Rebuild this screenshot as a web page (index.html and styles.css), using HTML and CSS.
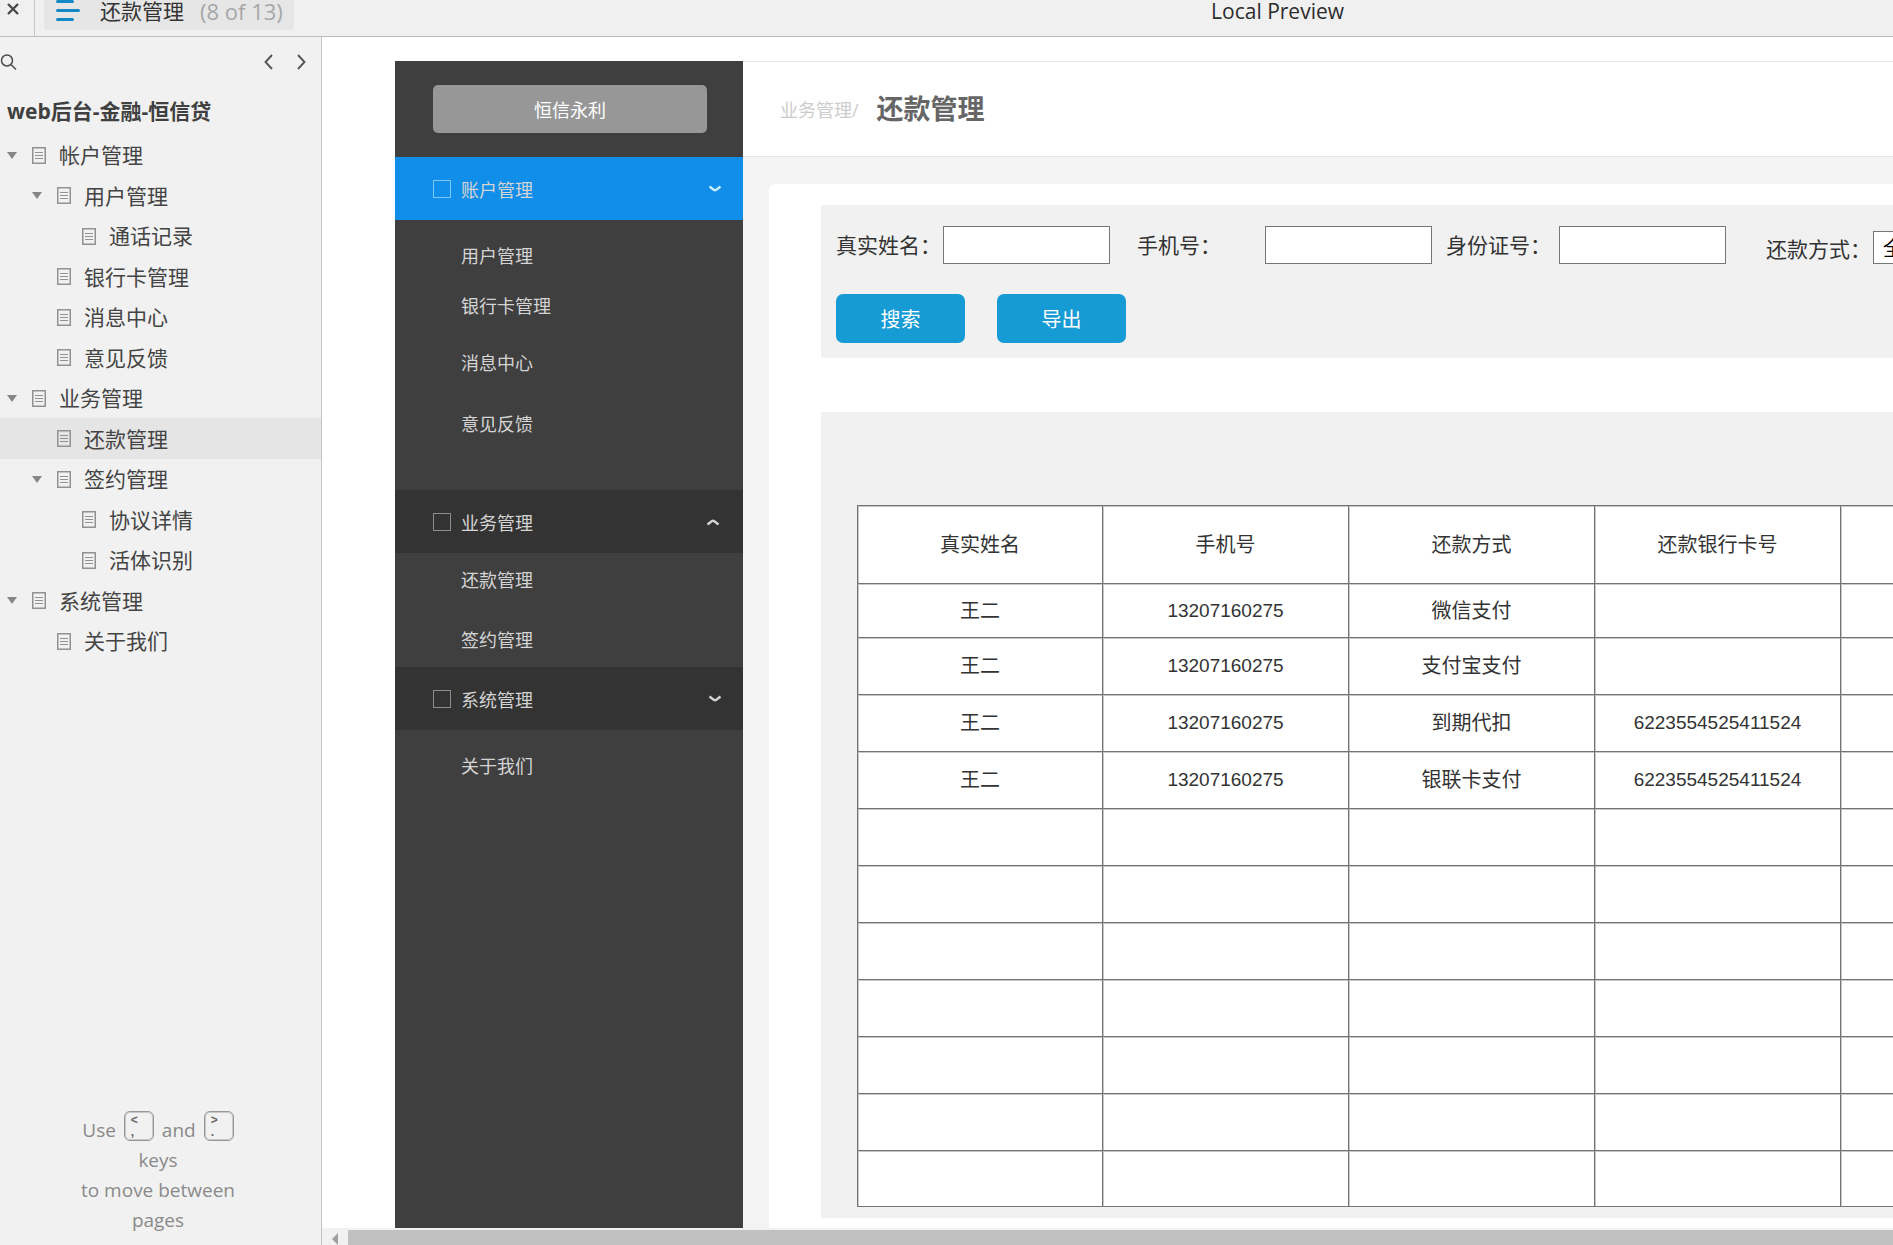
FILE: index.html
```html
<!DOCTYPE html>
<html lang="zh-CN">
<head>
<meta charset="utf-8">
<meta name="viewport" content="width=device-width, initial-scale=1">
<title>还款管理</title>
<link rel="stylesheet" href="styles.css">
</head>
<body>
<svg class="sprite" aria-hidden="true">
  <symbol id="page" viewBox="0 0 14 17">
    <path d="M.75.75h12.5v15.5H.75z" fill="none" stroke="#929292" stroke-width="1.5"/>
    <path d="M3 5.5h8M3 8.5h8M3 11.5h8" stroke="#929292" stroke-width="1.2"/>
  </symbol>
  <symbol id="caret" viewBox="0 0 10 7"><path d="M0 0h10L5 7z" fill="#868686"/></symbol>
  <symbol id="chevron" viewBox="0 0 14 8"><path d="M1.500 1.500L6 5Q7 5.600 8 5L12.500 1.500" fill="none" stroke="currentColor" stroke-width="2.400"/></symbol>
</svg>

<header class="topbar">
  <button class="close" type="button" aria-label="Close">
    <svg width="12" height="12" viewBox="0 0 12 12"><path d="M1 1l10 10M11 1L1 11" stroke="#4a4a4a" stroke-width="2.400"/></svg>
  </button>
  <button class="tab" type="button">
    <svg width="24" height="22" viewBox="0 0 24 22"><path d="M1.500 1.500h15M1.500 10.500h21M1.500 19.500h15" stroke="#138ac6" stroke-width="3" stroke-linecap="round"/></svg>
    <span class="tab-name">还款管理</span>
    <span class="tab-count">(8 of 13)</span>
  </button>
  <span class="preview">Local Preview</span>
</header>

<div class="workspace">
  <aside class="sitemap">
    <div class="tools">
      <button class="tool" type="button" aria-label="Search">
        <svg width="17" height="17" viewBox="0 0 17 17" fill="none" stroke="#4c4c4c" stroke-width="1.500"><circle cx="7" cy="6.500" r="5.500"/><path d="M11 10.500l5 5"/></svg>
      </button>
      <button class="tool prev" type="button" aria-label="Previous page">
        <svg width="9" height="16" viewBox="0 0 9 16" fill="none" stroke="#555" stroke-width="1.900"><path d="M8 1L1.500 8L8 15"/></svg>
      </button>
      <button class="tool" type="button" aria-label="Next page">
        <svg width="9" height="16" viewBox="0 0 9 16" fill="none" stroke="#555" stroke-width="1.900"><path d="M1 1l6.500 7L1 15"/></svg>
      </button>
    </div>
    <h1 class="project">web后台-金融-恒信贷</h1>
    <ul class="tree">
      <li class="node level-1"><svg class="caret"><use href="#caret"/></svg><svg class="page"><use href="#page"/></svg><a href="#">帐户管理</a></li>
      <li class="node level-2"><svg class="caret"><use href="#caret"/></svg><svg class="page"><use href="#page"/></svg><a href="#">用户管理</a></li>
      <li class="node level-3"><svg class="page"><use href="#page"/></svg><a href="#">通话记录</a></li>
      <li class="node level-2"><svg class="page"><use href="#page"/></svg><a href="#">银行卡管理</a></li>
      <li class="node level-2"><svg class="page"><use href="#page"/></svg><a href="#">消息中心</a></li>
      <li class="node level-2"><svg class="page"><use href="#page"/></svg><a href="#">意见反馈</a></li>
      <li class="node level-1"><svg class="caret"><use href="#caret"/></svg><svg class="page"><use href="#page"/></svg><a href="#">业务管理</a></li>
      <li class="node level-2 current"><svg class="page"><use href="#page"/></svg><a href="#" aria-current="page">还款管理</a></li>
      <li class="node level-2"><svg class="caret"><use href="#caret"/></svg><svg class="page"><use href="#page"/></svg><a href="#">签约管理</a></li>
      <li class="node level-3"><svg class="page"><use href="#page"/></svg><a href="#">协议详情</a></li>
      <li class="node level-3"><svg class="page"><use href="#page"/></svg><a href="#">活体识别</a></li>
      <li class="node level-1"><svg class="caret"><use href="#caret"/></svg><svg class="page"><use href="#page"/></svg><a href="#">系统管理</a></li>
      <li class="node level-2"><svg class="page"><use href="#page"/></svg><a href="#">关于我们</a></li>
    </ul>
    <div class="hint">
      <div class="hint-keys">
        <span>Use</span>
        <kbd class="key"><span>&lt;</span><span>,</span></kbd>
        <span>and</span>
        <kbd class="key"><span>&gt;</span><span>.</span></kbd>
      </div>
      <div>keys</div>
      <div>to move between</div>
      <div>pages</div>
    </div>
  </aside>

  <div class="frame">
    <div class="canvas">
      <nav class="menu">
        <div class="brand"><button class="brand-button" type="button">恒信永利</button></div>
        <button class="group active" type="button"><span class="square"></span>账户管理<svg class="chevron"><use href="#chevron"/></svg></button>
        <ul class="items account">
          <li><a href="#">用户管理</a></li>
          <li><a href="#">银行卡管理</a></li>
          <li><a href="#">消息中心</a></li>
          <li><a href="#">意见反馈</a></li>
        </ul>
        <button class="group" type="button"><span class="square"></span>业务管理<svg class="chevron up"><use href="#chevron"/></svg></button>
        <ul class="items business">
          <li><a href="#">还款管理</a></li>
          <li><a href="#">签约管理</a></li>
        </ul>
        <button class="group" type="button"><span class="square"></span>系统管理<svg class="chevron"><use href="#chevron"/></svg></button>
        <ul class="items system">
          <li><a href="#">关于我们</a></li>
        </ul>
      </nav>

      <main class="content">
        <div class="crumbs">
          <a href="#">业务管理/</a>
          <h2>还款管理</h2>
        </div>
        <div class="card">
          <form class="filters">
            <div class="fields">
              <label class="label" for="name">真实姓名：</label>
              <input class="box" id="name" type="text">
              <label class="label phone" for="phone">手机号：</label>
              <input class="box" id="phone" type="text">
              <label class="label idcard" for="idcard">身份证号：</label>
              <input class="box" id="idcard" type="text">
              <label class="label method" for="method">还款方式：</label>
              <select class="select" id="method"><option>全部</option></select>
            </div>
            <div class="actions">
              <button class="action" type="button">搜索</button>
              <button class="action" type="button">导出</button>
            </div>
          </form>
          <section class="results">
            <table class="grid">
              <colgroup><col class="col-name"><col class="col"><col class="col"><col class="col"><col class="col"></colgroup>
              <thead>
                <tr><th>真实姓名</th><th>手机号</th><th>还款方式</th><th>还款银行卡号</th><th></th></tr>
              </thead>
              <tbody>
                <tr class="first"><td>王二</td><td class="num">13207160275</td><td>微信支付</td><td></td><td></td></tr>
                <tr><td>王二</td><td class="num">13207160275</td><td>支付宝支付</td><td></td><td></td></tr>
                <tr><td>王二</td><td class="num">13207160275</td><td>到期代扣</td><td class="num">6223554525411524</td><td></td></tr>
                <tr><td>王二</td><td class="num">13207160275</td><td>银联卡支付</td><td class="num">6223554525411524</td><td></td></tr>
                <tr><td></td><td></td><td></td><td></td><td></td></tr>
                <tr><td></td><td></td><td></td><td></td><td></td></tr>
                <tr><td></td><td></td><td></td><td></td><td></td></tr>
                <tr><td></td><td></td><td></td><td></td><td></td></tr>
                <tr><td></td><td></td><td></td><td></td><td></td></tr>
                <tr><td></td><td></td><td></td><td></td><td></td></tr>
                <tr class="last"><td></td><td></td><td></td><td></td><td></td></tr>
              </tbody>
            </table>
          </section>
        </div>
      </main>
    </div>
    <div class="scrollbar">
      <svg width="6" height="12" viewBox="0 0 6 12"><path d="M6 0v12L0 6z" fill="#a0a0a0"/></svg>
      <div class="thumb"></div>
    </div>
  </div>
</div>
</body>
</html>
```

FILE: styles.css
```css
* { box-sizing: border-box; }

body {
  margin: 0;
  height: 100vh;
  display: flex;
  flex-direction: column;
  overflow: hidden;
  background: #fff;
  color: #333;
  font-family: "Open Sans", "Noto Sans CJK SC", sans-serif;
}

button {
  border: 0;
  margin: 0;
  padding: 0;
  background: none;
  font: inherit;
  color: inherit;
}

a { color: inherit; text-decoration: none; }
ul { list-style: none; margin: 0; padding: 0; }
svg { flex: none; }
.sprite { position: absolute; width: 0; height: 0; }

/* Player top bar */
.topbar {
  flex: none;
  display: flex;
  align-items: flex-start;
  height: 37px;
  background: #f0f0f0;
  border-bottom: 1px solid #bcbcbc;
}

.close {
  width: 35px;
  height: 36px;
  padding: 3px 8px 0 7px;
  border-right: 1px solid #c6c6c6;
  display: flex;
}

.tab {
  display: flex;
  align-items: flex-start;
  width: 250px;
  height: 30px;
  margin-left: 9px;
  padding-left: 12px;
  background: #e6e6e6;
  border-radius: 0 0 4px 4px;
  font-size: 21px;
  line-height: 22px;
}

.tab-name { margin-left: 20px; color: #333; }
.tab-count { margin-left: 16px; color: #a6a6a6; font-size: 22px; }

.preview {
  margin-left: auto;
  margin-right: 29%;
  color: #2c2c2c;
  font-size: 21px;
  line-height: 22px;
}

.workspace { flex: 1; display: flex; min-height: 0; }

/* Site map pane */
.sitemap {
  flex: none;
  width: 322px;
  display: flex;
  flex-direction: column;
  background: #f1f1f1;
  border-right: 1px solid #c4c4c4;
  color: #444;
}

.tools {
  display: flex;
  align-items: center;
  height: 50px;
  padding-right: 15px;
  gap: 24px;
}

.tool { display: flex; }
.prev { margin-left: auto; }

.project {
  margin: 0;
  padding-left: 7px;
  font-size: 21px;
  line-height: 48px;
  font-weight: 700;
  color: #404040;
}

.node {
  display: flex;
  align-items: center;
  height: 40px;
  font-size: 21px;
  line-height: 30px;
}

.node:nth-child(even) { height: 41px; }
.level-1 { padding-left: 7px; }
.level-2 { padding-left: 32px; }
.level-3 { padding-left: 57px; }
.current { background: #e5e5e5; }

.caret { width: 10px; height: 7px; }
.page { width: 14px; height: 17px; margin: 0 13px 0 25px; }
.caret + .page { margin-left: 15px; }

.hint {
  margin-top: auto;
  padding: 0 5px 10px 0;
  text-align: center;
  font-size: 19px;
  line-height: 30px;
  color: #8a8a8a;
}

.hint-keys { display: flex; justify-content: center; gap: 8px; }
.hint-keys > span { padding-top: 4px; }

.key {
  display: flex;
  flex-direction: column;
  align-items: flex-start;
  width: 30px;
  height: 30px;
  padding: 2px 0 0 6px;
  border: 1px solid #969696;
  border-radius: 6px;
  box-shadow: inset 0 0 0 1px #c9c9c9;
  font: 700 12px/12px "Liberation Sans", sans-serif;
  color: #666;
}

/* Prototype canvas */
.frame { flex: 1; min-width: 0; display: flex; flex-direction: column; }

.canvas {
  flex: 1;
  min-height: 0;
  display: flex;
  overflow: hidden;
  padding: 24px 0 0 73px;
}

.menu {
  flex: none;
  width: 348px;
  background: #3f3f3f;
  color: #d4d4d4;
  font-size: 18px;
}

.brand { padding: 24px 36px 24px 38px; }

.brand-button {
  display: block;
  width: 100%;
  height: 48px;
  border-radius: 5px;
  background: #979797;
  color: #fff;
}

.group {
  display: flex;
  align-items: center;
  width: 100%;
  height: 63px;
  padding: 0 21px 0 38px;
  background: #333;
}

.group.active { background: #108ee9; }

.square {
  width: 18px;
  height: 18px;
  margin-right: 10px;
  border: 1px solid #8e8e8e;
}

.active .square { border-color: #7cc8f8; }
.chevron { width: 14px; height: 8px; margin-left: auto; }
.active .chevron { color: #c5edff; }
.up { transform: rotate(180deg); margin-right: 2px; }

.items { display: flex; flex-direction: column; }
.items li { display: flex; align-items: center; height: 60px; padding-left: 66px; }
.account { padding: 10px 0 37px; }
.account li:nth-child(1) { height: 50px; }
.account li:nth-child(2) { height: 50px; }
.account li:nth-child(3) { height: 63px; }
.business { padding-bottom: 2px; gap: 8px; }
.business li { height: 52px; }
.system { padding-top: 5px; }

.content {
  flex: 1 0 auto;
  display: flex;
  flex-direction: column;
  background: #f3f3f3;
}

.crumbs {
  display: flex;
  align-items: center;
  gap: 18px;
  height: 96px;
  padding-left: 37px;
  background: #fff;
  border-top: 1px solid #e6e6e6;
  border-bottom: 1px solid #e6e6e6;
  color: #ccc;
  font-size: 18px;
}

.crumbs h2 { margin: 0; font-size: 27px; line-height: 36px; color: #666; }

.card {
  flex: 1;
  margin: 27px 0 0 26px;
  padding: 21px 0 0 52px;
  background: #fff;
  border-radius: 6px 0 0 0;
}

.filters { height: 153px; padding: 21px 0 0 15px; background: #f1f1f1; }
.fields { display: flex; align-items: center; height: 38px; }

.label { width: 107px; font-size: 21px; line-height: 30px; white-space: nowrap; }
.label.phone { width: 128px; margin-left: 27px; }
.label.idcard { width: 113px; margin-left: 14px; }
.label.method { margin-left: 40px; align-self: flex-end; }

.box {
  width: 167px;
  height: 38px;
  padding: 0 8px;
  border: 1px solid #767676;
  background: #fff;
  font: inherit;
}

.select {
  align-self: flex-end;
  width: 167px;
  height: 33px;
  padding: 0 5px;
  border: 1px solid #767676;
  border-radius: 0;
  background: #fff;
  color: #000;
  font: 20px/30px "Noto Sans CJK SC", sans-serif;
}

.actions { display: flex; gap: 32px; padding-top: 30px; }

.action {
  width: 129px;
  height: 49px;
  border-radius: 7px;
  background: #169bd5;
  color: #fff;
  font-size: 20px;
}

.results { margin-top: 54px; padding: 93px 0 11px 36px; background: #f1f1f1; }

.grid {
  table-layout: fixed;
  width: 1230px;
  border-collapse: collapse;
  background: #fff;
}

.col-name { width: 245px; }
.col { width: 246px; }

.grid th,
.grid td {
  height: 57px;
  padding: 0;
  border: 1px solid #747474;
  box-shadow: inset 1px 1px #c8c8c8;
  text-align: center;
  font-size: 20px;
  line-height: 28px;
  font-weight: 400;
}

.grid th { height: 78px; }
.grid .first td { height: 54px; }
.grid .last td { height: 56px; }
.grid .num { font-family: "Liberation Sans", sans-serif; font-size: 19px; }

/* Horizontal scrollbar */
.scrollbar {
  flex: none;
  display: flex;
  align-items: center;
  gap: 10px;
  height: 17px;
  padding: 2px 0 0 10px;
  background: #f1f1f1;
}

.scrollbar svg { align-self: flex-end; }
.thumb { flex: 1; align-self: stretch; background: #c1c1c1; }
```
